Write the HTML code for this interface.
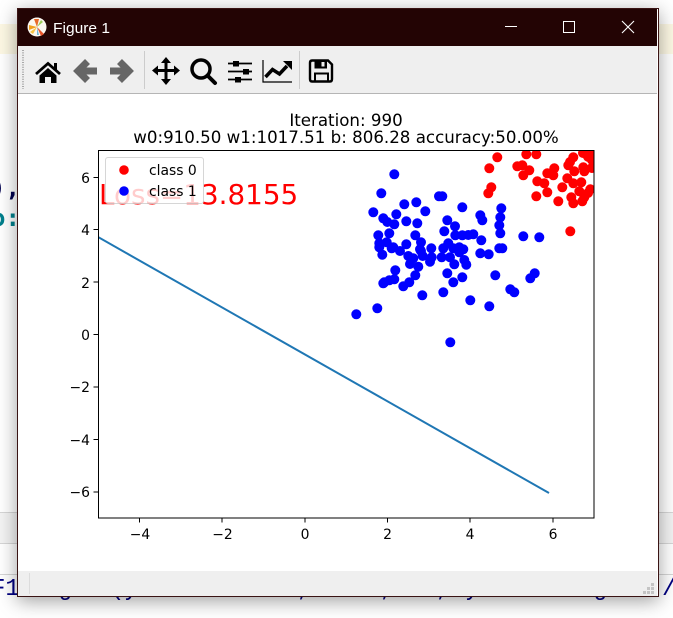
<!DOCTYPE html>
<html><head><meta charset="utf-8"><style>
html,body{margin:0;padding:0;background:#fff;width:673px;height:618px;overflow:hidden}
#win{position:absolute;left:17px;top:8px;width:640px;height:587px;border:1px solid #3a1414;background:#fff;box-shadow:0 4px 18px rgba(0,0,0,.38)}
svg{position:absolute;left:0;top:0}
.b circle,.r circle{r:5px}
.b{fill:#00f}.r{fill:#f00}
.m{font-family:"DejaVu Sans",sans-serif;font-size:13.9px;fill:#000}
.t{font-family:"DejaVu Sans",sans-serif;font-size:16.67px;fill:#000}
</style></head><body>
<svg width="673" height="618" viewBox="0 0 673 618">
<rect x="0" y="24" width="673" height="30" fill="#fdf8e4"/>
<rect x="0" y="512" width="673" height="31" fill="#f3f3f3"/>
<path d="M0 512.5H673M0 543.5H673M0 574.5H673" stroke="#d6d6d6"/>
<text x="-9" y="196" font-family="DejaVu Sans Mono,monospace" font-weight="bold" font-size="24" fill="#00004f">),</text>
<text x="-9" y="226" font-family="DejaVu Sans Mono,monospace" font-weight="bold" font-size="24" fill="#007f8c">o:</text>
<g font-family="Liberation Mono,monospace" font-size="24" fill="#000080">
<text x="-9" y="595">F1</text><text x="58" y="595">g</text><text x="110" y="595">(</text><text x="124" y="595">y</text>
<text x="297" y="595">,</text><text x="380" y="595">,</text><text x="436" y="595">,</text><text x="465" y="595">y</text><text x="593" y="595">g</text><text x="662" y="595">/</text>
</g>
</svg>
<div id="win"></div>
<svg width="673" height="618" viewBox="0 0 673 618">
<!-- title bar -->
<rect x="18" y="9" width="639" height="37" fill="#230404"/>
<circle cx="37" cy="27" r="9.5" fill="#fbf7f0"/>
<path d="M37 27L29 25L29 30Z" fill="#f2a01e"/><path d="M37 27L34 19L39 19Z" fill="#e8692a"/><path d="M37 27L44 34L41 36Z" fill="#e8552a"/><path d="M37 27L41 20L43 22Z" fill="#9ccc5a"/><path d="M37 27L30 32L33 34Z" fill="#f6c244"/><path d="M37 27L37 35L39 35Z" fill="#6fb7d8"/>
<text x="53" y="33" font-family="Liberation Sans,sans-serif" font-size="15" textLength="57" lengthAdjust="spacingAndGlyphs" fill="#fff">Figure 1</text>
<path d="M505 26.5H517" stroke="#fff" stroke-width="1"/>
<rect x="563.5" y="21.5" width="11" height="11" fill="none" stroke="#fff" stroke-width="1"/>
<path d="M622 21L634 33M634 21L622 33" stroke="#fff" stroke-width="1.1"/>
<!-- toolbar -->
<rect x="18" y="46" width="639" height="47" fill="#efefef"/>
<rect x="18" y="93" width="639" height="1" fill="#b5b5b5"/>
<path d="M22.500 50V89M23.500 50V89" stroke="#a8a8a8" stroke-dasharray="1 1.4"/>
<path d="M144.500 51V89M299.500 51V89" stroke="#ccc"/>
<path d="M36 74L48 63.500L60 74" fill="none" stroke="#000" stroke-width="2.800"/>
<path d="M54 63H57V70H54Z"/>
<path d="M39.500 75.500L48 68L56.500 75.500V83H51V77H45V83H39.500Z"/>
<path d="M97 71H79M87.500 61.500L78 71L87.500 80.500" fill="none" stroke="#666" stroke-width="7"/>
<path d="M110 71H128M119.500 61.500L129 71L119.500 80.500" fill="none" stroke="#666" stroke-width="7"/>
<path d="M166 60V81M155 70.500H177" stroke="#000" stroke-width="3"/>
<path d="M166 57L171 63H161ZM166 85L171 79H161ZM152 70.500L158 65.500V75.500ZM180 70.500L174 65.500V75.500Z"/>
<circle cx="201" cy="69" r="9" fill="none" stroke="#000" stroke-width="3.500"/>
<path d="M207.500 75.500L215 83" stroke="#000" stroke-width="4" stroke-linecap="round"/>
<path d="M228 63.500H252M228 71.500H252M228 79.500H252" stroke="#000" stroke-width="1.800"/>
<rect x="233" y="61" width="6" height="5.500"/><rect x="243" y="69" width="6" height="5.500"/><rect x="235" y="77" width="6" height="5.500"/>
<path d="M263 60V82H292" fill="none" stroke="#000" stroke-width="1.200"/>
<path d="M265.500 77L272.500 69.500L279.500 74L287 66" fill="none" stroke="#000" stroke-width="3.500"/>
<path d="M283 61H292V70Z"/>
<path d="M312 60.500H328L332 64.500V79Q332 81.500 330 81.500H312Q310 81.500 310 79V63Q310 60.500 312 60.500Z" fill="none" stroke="#000" stroke-width="2.400"/>
<path d="M314.500 60H327V68.500H314.500Z"/><rect x="321.500" y="62" width="3" height="4.500" fill="#efefef"/>
<rect x="315" y="73.500" width="13" height="8" fill="none" stroke="#000" stroke-width="2"/>
<!-- status bar -->
<rect x="18" y="571" width="639" height="25" fill="#efefef"/>
<path d="M29.500 573V594" stroke="#dcdcdc"/>
<path d="M651 583h3v3h-3zM647 587h3v3h-3zM651 587h3v3h-3zM643 591h3v3h-3zM647 591h3v3h-3zM651 591h3v3h-3z" fill="#c4c4c4"/>
<!-- plot -->
<defs><clipPath id="ax"><rect x="98.500" y="150.500" width="495.500" height="367.500"/></clipPath></defs>
<text class="t" x="346" y="126" text-anchor="middle">Iteration: 990</text>
<text class="t" x="346" y="143" text-anchor="middle">w0:910.50 w1:1017.51 b: 806.28 accuracy:50.00%</text>
<g clip-path="url(#ax)">
<text x="99" y="204" font-family="DejaVu Sans,sans-serif" font-size="27.8" fill="#f00">Loss=13.8155</text>
<path d="M98 237L549 493" stroke="#1f77b4" stroke-width="2" fill="none"/>
<g class="r">
<circle cx="497.300" cy="157.300"/><circle cx="489.300" cy="168.300"/><circle cx="526.300" cy="154.300"/><circle cx="536.300" cy="154.300"/><circle cx="517.300" cy="166.300"/><circle cx="522.300" cy="165.300"/><circle cx="529.300" cy="170.300"/><circle cx="523.300" cy="175.300"/><circle cx="554.300" cy="168.300"/><circle cx="547.300" cy="173.300"/><circle cx="553.300" cy="175.300"/><circle cx="568.300" cy="165.300"/><circle cx="573.300" cy="157.300"/><circle cx="570" cy="162"/><circle cx="574.300" cy="171.300"/><circle cx="583.300" cy="167.300"/><circle cx="584.300" cy="171.300"/><circle cx="588" cy="156.700"/><circle cx="583" cy="153"/><circle cx="591.700" cy="168"/><circle cx="590" cy="154"/><circle cx="592" cy="160"/><circle cx="537.300" cy="181.300"/><circle cx="544.300" cy="183.300"/><circle cx="567.300" cy="178.300"/><circle cx="573.300" cy="183.300"/><circle cx="581.300" cy="182.300"/><circle cx="562.300" cy="187.300"/><circle cx="547.300" cy="192.300"/><circle cx="536.300" cy="196.300"/><circle cx="558.300" cy="201.300"/><circle cx="579.300" cy="191.300"/><circle cx="571.300" cy="197.300"/><circle cx="584.300" cy="197.300"/><circle cx="582.300" cy="201.300"/><circle cx="573.300" cy="203.300"/><circle cx="590.300" cy="189.300"/><circle cx="588" cy="193"/><circle cx="491.300" cy="187.300"/><circle cx="488.300" cy="193.300"/><circle cx="570.300" cy="231.300"/>
</g>
<g class="b">
<circle cx="394.300" cy="174.300"/><circle cx="381.300" cy="193.300"/><circle cx="404.300" cy="204.300"/><circle cx="416.300" cy="202.300"/><circle cx="425.300" cy="211.300"/><circle cx="439" cy="196.300"/><circle cx="442.300" cy="196.300"/><circle cx="462.300" cy="207.300"/><circle cx="373.300" cy="212.300"/><circle cx="383.300" cy="218.300"/><circle cx="387.300" cy="222"/><circle cx="396.300" cy="214.300"/><circle cx="394.300" cy="224.300"/><circle cx="406.300" cy="221.300"/><circle cx="417.300" cy="223.300"/><circle cx="447.300" cy="220.300"/><circle cx="455" cy="226.300"/><circle cx="444.300" cy="231.300"/><circle cx="389.300" cy="233.300"/><circle cx="378.300" cy="235.300"/><circle cx="415.300" cy="235.300"/><circle cx="455.300" cy="235.300"/><circle cx="462.300" cy="235.300"/><circle cx="421" cy="242.300"/><circle cx="379.300" cy="243.300"/><circle cx="386.700" cy="242.300"/><circle cx="406.300" cy="244.300"/><circle cx="393.300" cy="247.300"/><circle cx="431.300" cy="248.300"/><circle cx="448.300" cy="243.300"/><circle cx="443.300" cy="248.300"/><circle cx="420" cy="249.300"/><circle cx="379.300" cy="247.300"/><circle cx="459.300" cy="247.300"/><circle cx="468.300" cy="235"/>
<circle cx="501.300" cy="208.300"/><circle cx="480.300" cy="215.300"/><circle cx="482.300" cy="220.300"/><circle cx="500.300" cy="217.300"/><circle cx="499.300" cy="225.300"/><circle cx="500.300" cy="233.300"/><circle cx="473.300" cy="234.300"/><circle cx="481.300" cy="240.300"/><circle cx="523.300" cy="236.300"/><circle cx="539.300" cy="237.300"/><circle cx="499.300" cy="248.300"/><circle cx="502.300" cy="248.300"/>
<circle cx="382.300" cy="254.700"/><circle cx="391.700" cy="248.300"/><circle cx="400" cy="251"/><circle cx="408.300" cy="256"/><circle cx="413.300" cy="258.300"/><circle cx="421" cy="251"/><circle cx="422.700" cy="256"/><circle cx="431.700" cy="257.300"/><circle cx="430" cy="261.700"/><circle cx="418.300" cy="266.700"/><circle cx="410" cy="264"/><circle cx="453.300" cy="248.300"/><circle cx="441.700" cy="257.300"/><circle cx="450" cy="257.300"/><circle cx="454.300" cy="264.300"/><circle cx="459.300" cy="252.300"/><circle cx="463.300" cy="249.300"/><circle cx="464.300" cy="260"/><circle cx="466.300" cy="264.700"/><circle cx="480.300" cy="253.300"/><circle cx="488.700" cy="254.300"/><circle cx="395.300" cy="270.300"/><circle cx="415.300" cy="275.300"/><circle cx="447.300" cy="273.300"/><circle cx="462.300" cy="277.300"/><circle cx="453.300" cy="282.300"/><circle cx="495.300" cy="275.300"/><circle cx="534.700" cy="273.300"/><circle cx="530.300" cy="278.300"/><circle cx="394.300" cy="279.300"/><circle cx="389.300" cy="280.300"/><circle cx="384.300" cy="282.300"/><circle cx="383.300" cy="283.300"/><circle cx="409.300" cy="282.300"/><circle cx="403.300" cy="286.300"/><circle cx="422.300" cy="295.300"/><circle cx="443.300" cy="292.300"/><circle cx="470.300" cy="300.300"/><circle cx="510.300" cy="289.300"/><circle cx="514.300" cy="292.300"/><circle cx="489.300" cy="306.300"/><circle cx="377.300" cy="308.300"/><circle cx="356.300" cy="314.300"/><circle cx="450.300" cy="342.300"/>
</g>
</g>
<rect x="98.500" y="150.500" width="495.500" height="367.500" fill="none" stroke="#000" stroke-width="1"/>
<path d="M139.500 518V522.500M222 518V522.500M305 518V522.500M387.500 518V522.500M470 518V522.500M553 518V522.500M98 177.500H93.500M98 229.500H93.500M98 282H93.500M98 334.500H93.500M98 387H93.500M98 439.500H93.500M98 492H93.500" stroke="#000" stroke-width="1"/>
<g class="m" text-anchor="middle">
<text x="140" y="539">−4</text><text x="222.500" y="539">−2</text><text x="305" y="539">0</text><text x="387.500" y="539">2</text><text x="470" y="539">4</text><text x="553" y="539">6</text>
</g>
<g class="m" text-anchor="end">
<text x="90" y="183">6</text><text x="90" y="235">4</text><text x="90" y="288">2</text><text x="90" y="340">0</text><text x="90" y="392">−2</text><text x="90" y="445">−4</text><text x="90" y="497">−6</text>
</g>
<!-- legend -->
<rect x="105.500" y="157.500" width="98" height="46" rx="2.500" fill="#fff" fill-opacity=".8" stroke="#ccc" stroke-opacity=".8"/>
<circle cx="124" cy="170" r="4.800" fill="#f00"/><circle cx="124" cy="191" r="4.800" fill="#00f"/>
<text class="m" x="149" y="175">class 0</text><text class="m" x="149" y="196">class 1</text>
</svg>
</body></html>
